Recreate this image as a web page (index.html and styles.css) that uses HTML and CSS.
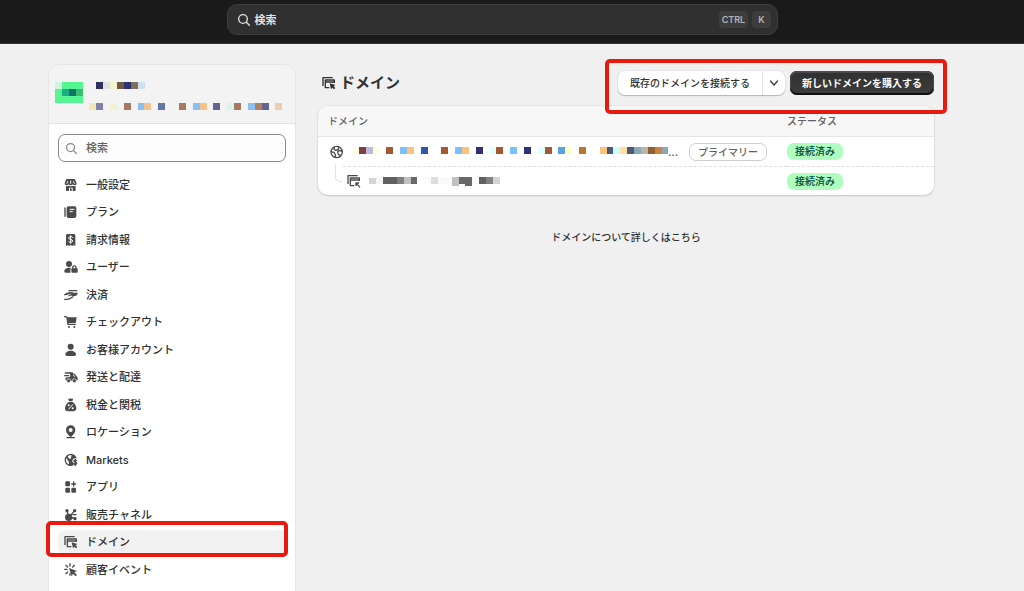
FILE: index.html
```html
<!DOCTYPE html>
<html lang="ja">
<head>
  <meta charset="UTF-8">
  <meta name="viewport" content="width=device-width, initial-scale=1.0">
  <title>ドメイン</title>
  <link rel="stylesheet" href="styles.css">
</head>
<body>
  <svg class="defs" aria-hidden="true">
    <symbol id="i-search" viewBox="0 0 42 42"><g fill="none" stroke="currentColor" stroke-width="4" stroke-linecap="round"><circle cx="18" cy="18" r="13"/><path d="M28 28l9 9"/></g></symbol>
    <symbol id="i-domain" viewBox="0 0 42 42"><g fill="none" stroke="currentColor" stroke-width="4" stroke-linejoin="round"><path d="M3 30V5h29M22 35H10V12h27v9M10 18h27"/></g><path d="M23 22l17 5-5 4 5 5-4 4-5-5-4 5z" fill="currentColor"/></symbol>
  </svg>

  <header class="topbar">
    <button type="button" class="global-search">
      <svg class="icon"><use href="#i-search"/></svg>
      <span class="global-search-label">検索</span>
      <kbd>CTRL</kbd><kbd>K</kbd>
    </button>
  </header>

  <div class="page">
    <aside class="sidebar">
      <div class="shop">
        <svg class="shop-logo" viewBox="0 0 28 21" aria-hidden="true">
          <path fill="#55f591" d="M0 0h28v21H0z"/><path fill="#cff5de" d="M0 0h7v7H0z"/><path fill="#1cae84" d="M7 7h7v7H7z"/><path fill="#117568" d="M14 7h7v7h-7z"/><path fill="#3abc74" d="M21 7h7v7h-7z"/>
        </svg>
        <svg class="shop-name" viewBox="0 0 194 28" aria-hidden="true">
          <path fill="#30305c" d="M7 0h7v7H7z"/><path fill="#e1e1e8" d="M14 0h7v7h-7z"/><path fill="#f3f3d0" d="M21 0h7v7h-7z"/><path fill="#705a3f" d="M28 0h7v7h-7z"/><path fill="#2e3075" d="M35 0h7v7h-7z"/><path fill="#80705a" d="M42 0h7v7h-7z"/><path fill="#cfdfee" d="M49 0h7v7h-7z"/>
          <path fill="#f1e8b8" d="M0 21h7v7H0z"/><path fill="#8080a8" d="M7 21h7v7H7z"/><path fill="#f1f1d8" d="M21 21h7v7h-7z"/><path fill="#a87860" d="M35 21h7v7h-7zM90 21h7v7h-7zM145 21h7v7h-7z"/><path fill="#88c0f5" d="M49 21h7v7h-7zM104 21h7v7h-7zM159 21h7v7h-7z"/><path fill="#f5c18b" d="M55 21h7v7h-7zM111 21h7v7h-7z"/><path fill="#6078a8" d="M69 21h7v7h-7z"/><path fill="#646490" d="M124 21h7v7h-7zM173 21h7v7h-7z"/><path fill="#d8f3f0" d="M138 21h7v7h-7z"/><path fill="#b08060" d="M166 21h7v7h-7z"/><path fill="#ebcdb0" d="M186 21h7v7h-7z"/>
        </svg>
      </div>

      <div class="side-search">
        <svg class="icon"><use href="#i-search"/></svg>
        <input type="search" placeholder="検索" aria-label="検索">
      </div>

      <nav class="menu">
        <ul>
          <li><a href="#"><svg class="icon" viewBox="0 0 42 42"><path d="M9 3h21c2 0 3 1 4 3l4 10c0 4-3 6-6 6-3 0-5-1-6-3-1 2-3 3-6 3s-5-1-6-3c-1 2-3 3-6 3-4 0-6-2-6-6L6 6c0-2 1-3 3-3z"/><path d="M6 24c4 1 7 0 9-1 3 2 8 2 11 0 3 1 6 2 9 1v12c0 2-1 3-3 3h-6V29H15v10H9c-2 0-3-1-3-3z"/><path class="cut" d="M11 11l-2 5M20 9v7M29 11l2 5"/><path d="M18 31h5v8h-5z"/></svg>一般設定</a></li>
          <li><a href="#"><svg class="icon" viewBox="0 0 42 42"><path class="line" d="M3 9v25"/><rect x="8" y="4" width="29" height="35" rx="6"/><path class="cut" d="M18 13h12M18 20h7"/></svg>プラン</a></li>
          <li><a href="#"><svg class="icon" viewBox="0 0 42 42"><path d="M11 3h18c3 0 5 2 5 5v31l-5-3-4 3-5-3-5 3-4-3-5 3V8c0-3 2-5 5-5z"/><path class="cut" d="M26 14c-1-2-3-3-6-3-4 0-6 2-6 4 0 6 12 3 12 9 0 3-3 4-6 4s-5-1-6-3M20 8v23"/></svg>請求情報</a></li>
          <li><a href="#"><svg class="icon" viewBox="0 0 42 42"><circle cx="15" cy="12" r="9"/><path d="M1 34c0-7 6-11 14-11 2 0 4 0 6 1-1 2-2 4-2 6v8H5c-3 0-4-1-4-4z"/><rect x="22" y="25" width="19" height="13" rx="3"/><path class="line" d="M26 26v-3c0-7 10-7 10 0v3"/></svg>ユーザー</a></li>
          <li><a href="#"><svg class="icon" viewBox="0 0 42 42"><path d="M18 6h18c3 0 5 2 5 4H12c1-3 3-4 6-4zM8 14h33l-1 5c-1 4-4 5-7 5H20l4-4c2-2 0-5-3-4L9 20H2z"/><path class="line" d="M2 20c6 0 8-4 14-5l7-1c3 0 3 3 1 4l-9 5M2 34h8c8 0 12-4 17-8"/></svg>決済</a></li>
          <li><a href="#"><svg class="icon" viewBox="0 0 42 42"><path class="line" d="M2 5h4l3 2 3 21h22"/><path d="M9 7h29l-2 14c0 2-2 3-4 3H12z"/><circle cx="15" cy="36" r="3"/><circle cx="31" cy="36" r="3"/></svg>チェックアウト</a></li>
          <li><a href="#"><svg class="icon" viewBox="0 0 42 42"><circle cx="20" cy="11" r="9"/><path d="M4 34c0-6 7-11 16-11s16 5 16 11c0 3-2 5-5 5H9c-3 0-5-2-5-5z"/></svg>お客様アカウント</a></li>
          <li><a href="#"><svg class="icon" viewBox="0 0 42 42"><path class="line" d="M4 9h14M2 17h12"/><path d="M17 7h6c3 0 4 1 5 4h3c3 0 5 5 6 8 3 1 4 3 4 5v4c0 3-2 4-4 4H9c-3 0-5-2-5-5 0-2 1-4 3-5h7c5 0 6-7 4-8z"/><path class="cut" d="M29 15l2 4"/><g class="wheel"><circle cx="14" cy="32" r="6"/><circle cx="31" cy="32" r="6"/></g></svg>発送と配達</a></li>
          <li><a href="#"><svg class="icon" viewBox="0 0 42 42"><path d="M12 1l4 2 4-2 4 2 4-2-3 9H15zM14 12h12c7 5 11 12 11 19 0 6-4 9-9 9H12c-5 0-9-3-9-9 0-7 4-14 11-19z"/><path class="cut" d="M14 33l12-13"/><g fill="#fff"><circle cx="14" cy="22" r="3"/><circle cx="26" cy="31" r="3"/></g></svg>税金と関税</a></li>
          <li><a href="#"><svg class="icon" viewBox="0 0 42 42"><path fill-rule="evenodd" d="M20 1c8 0 14 6 14 14 0 9-6 13-11 19h-6C12 28 6 24 6 15 6 7 12 1 20 1zm0 8a6 6 0 100 12 6 6 0 000-12z"/><path class="line" d="M9 38h22M20 30v8"/></svg>ロケーション</a></li>
          <li><a href="#"><svg class="icon" viewBox="0 0 42 42"><path fill-rule="evenodd" d="M20 3c10 0 17 6 18 14-5-3-13 0-13 6 0 5 3 6 5 7l-2 7c-2 1-5 2-8 2C10 39 2 31 2 21S10 3 20 3zM7 15c-3 9 1 16 8 19v-6l-4-7zm12-8c-3 0-6 1-8 4l6 7 5-3-2-4 5-3z"/><path class="line" d="M38 23c-2-3-9-2-8 2 1 3 8 2 8 6s-7 4-9 1M34 19v19"/></svg>Markets</a></li>
          <li><a href="#"><svg class="icon" viewBox="0 0 42 42"><rect x="4" y="4" width="14" height="15" rx="3"/><rect x="4" y="23" width="14" height="15" rx="3"/><rect x="22" y="23" width="14" height="15" rx="3"/><path class="line" d="M29 6v12M23 12h12"/></svg>アプリ</a></li>
          <li><a href="#"><svg class="icon" viewBox="0 0 42 42"><circle cx="9" cy="8" r="5"/><circle cx="32" cy="8" r="5"/><circle cx="33" cy="32" r="5"/><circle cx="14" cy="28" r="11"/><path class="line" d="M9 8l4 14M32 8L19 23M19 30h14M27 20h9"/></svg>販売チャネル</a></li>
          <li class="marked"><a href="#" class="active" aria-current="page"><svg class="icon"><use href="#i-domain"/></svg>ドメイン</a></li>
          <li><a href="#"><svg class="icon" viewBox="0 0 42 42"><path class="line" d="M18 2v7M6 7l5 5M2 19h7M6 32l5-5M31 7l-5 5M18 31v6"/><path d="M15 15l24 9-8 4 8 8-4 4-8-8-4 8z"/></svg>顧客イベント</a></li>
        </ul>
      </nav>
    </aside>

    <main class="content">
      <div class="title-row">
        <h1><svg class="icon"><use href="#i-domain"/></svg>ドメイン</h1>
        <div class="actions">
          <div class="split">
            <button type="button">既存のドメインを接続する</button>
            <button type="button" class="split-more" aria-label="その他の操作"><svg viewBox="0 0 10 10"><path d="M1.500 3l3.500 4 3.500-4"/></svg></button>
          </div>
          <button type="button" class="primary">新しいドメインを購入する</button>
        </div>
      </div>

      <div class="card">
        <table>
          <thead>
            <tr><th>ドメイン</th><th class="status">ステータス</th></tr>
          </thead>
          <tbody>
            <tr>
              <td>
                <div class="domain">
                  <svg class="icon" viewBox="0 0 42 42"><g fill="none" stroke="currentColor" stroke-width="4" stroke-linejoin="round"><circle cx="20" cy="21" r="17"/><path d="M13 6l-1 7 6 3 7-3 1-8M3 20l9 2 5 8-3 8M38 20l-8-4-7 4 2 8 5 2 1 5"/></g></svg>
                  <svg class="domain-name" viewBox="0 0 316 9" aria-hidden="true">
                    <path fill="#ffffe8" d="M0 0h7v7H0z"/><path fill="#804040" d="M7 0h7v7H7z"/><path fill="#c0b8d8" d="M14 0h7v7h-7z"/><path fill="#ffffe0" d="M21 0h6v7h-6z"/>
                    <path fill="#a85830" d="M34 0h7v7h-7zM89 0h7v7h-7zM144 0h7v7h-7zM193 0h7v7h-7z"/><path fill="#78c0ff" d="M48 0h7v7h-7zM103 0h7v7h-7zM158 0h7v7h-7z"/><path fill="#ffc078" d="M55 0h7v7h-7zM110 0h7v7h-7zM248 0h7v7h-7z"/>
                    <path fill="#3058a8" d="M69 0h7v7h-7z"/><path fill="#303078" d="M124 0h7v7h-7zM172 0h7v7h-7z"/><path fill="#e0ffff" d="M138 0h6v7h-6zM186 0h7v7h-7z"/><path fill="#58a0e0" d="M206 0h7v7h-7z"/><path fill="#ffffc0" d="M213 0h7v7h-7z"/><path fill="#b87430" d="M227 0h7v7h-7z"/>
                    <path fill="#505878" d="M255 0h6v7h-6zM275 0h7v7h-7z"/><path fill="#c8ffff" d="M261 0h7v7h-7z"/><path fill="#ffe0a0" d="M268 0h7v7h-7z"/><path fill="#88a8b8" d="M282 0h7v7h-7zM310 0h6v7h-6z"/><path fill="#b8b8a8" d="M289 0h7v7h-7z"/><path fill="#906030" d="M296 0h7v7h-7z"/><path fill="#c88440" d="M303 0h7v7h-7z"/>
                  </svg>
                  <span class="more">...</span>
                  <span class="pill">プライマリー</span>
                </div>
              </td>
              <td class="status"><span class="badge">接続済み</span></td>
            </tr>
            <tr>
              <td>
                <div class="domain child">
                  <span class="branch"></span>
                  <svg class="icon" viewBox="0 0 42 42"><g fill="none" stroke="currentColor" stroke-width="4" stroke-linejoin="round"><path d="M3 30V5h29M22 35H10V12h27v9M10 18h27M39 40L28 28M27 36v-9h9"/></g></svg>
                  <svg class="domain-name" viewBox="0 0 316 9" aria-hidden="true">
                    <path fill="#d4d4d4" d="M0 1h7v6H0zM124 0h7v7h-7z"/><path fill="#f5f5f5" d="M7 0h7v7H7z"/><path fill="#606060" d="M14 0h14v7H14zM110 0h7v7h-7z"/><path fill="#808080" d="M28 0h7v7h-7zM117 0h7v7h-7z"/><path fill="#c0c0c0" d="M35 0h7v7h-7zM83 0h7v9h-7z"/><path fill="#686868" d="M42 0h6v7h-6zM90 0h6v7h-6zM96 0h7v9h-7z"/><path fill="#fafafa" d="M55 0h7v7h-7zM69 0h14v7H69z"/><path fill="#ddd" d="M62 0h7v7h-7z"/>
                  </svg>
                </div>
              </td>
              <td class="status"><span class="badge">接続済み</span></td>
            </tr>
          </tbody>
        </table>
      </div>

      <p class="help"><a href="#">ドメインについて詳しくはこちら</a></p>
    </main>
  </div>
</body>
</html>
```
FILE: styles.css
```css
* {
  box-sizing: border-box;
}

body {
  display: flex;
  flex-direction: column;
  margin: 0;
  min-height: 100vh;
  background: #f0f0f0;
  color: #303030;
  font-family: Inter, "Noto Sans CJK JP", sans-serif;
  font-size: 11px;
  font-weight: 500;
  line-height: 16px;
}

button,
input {
  font: inherit;
  color: inherit;
}

a {
  color: inherit;
  text-decoration: none;
}

.defs {
  position: absolute;
  width: 0;
  height: 0;
}

.icon {
  flex: none;
  width: 14px;
  height: 14px;
  fill: currentColor;
}

.icon .line,
.icon .cut {
  fill: none;
  stroke: currentColor;
  stroke-width: 4;
  stroke-linecap: round;
}

.icon .cut {
  stroke: #fff;
  stroke-width: 3;
}

.icon .wheel {
  stroke: #fff;
  stroke-width: 2;
}

/* top bar */
.topbar {
  display: flex;
  justify-content: center;
  padding: 4px 20px 8px 0;
  background: #1a1a1a;
  border-bottom: 1px solid #383432;
}

.global-search {
  display: flex;
  align-items: center;
  gap: 4px;
  width: 100%;
  max-width: 551px;
  height: 31px;
  padding: 0 6px 0 9px;
  background: #303030;
  border: 1px solid #3d3d3d;
  border-radius: 10px;
  color: #e3e3e3;
  font-weight: 600;
  text-align: left;
}

.global-search-label {
  flex: 1;
}

kbd {
  padding: 0 3px;
  background: #3d3d3d;
  border-radius: 4px;
  color: #b5b5b5;
  font-family: inherit;
  font-size: 9px;
  line-height: 17px;
}

kbd:last-child {
  padding: 0 6px;
}

/* layout */
.page {
  flex: 1;
  display: flex;
  gap: 22px;
  padding: 20px 90px 0 48px;
}

.sidebar {
  flex: none;
  width: 248px;
  background: #fff;
  border: 1px solid #e6e6e6;
  border-bottom: 0;
  border-radius: 12px 12px 0 0;
}

.shop {
  display: flex;
  align-items: flex-start;
  gap: 6px;
  padding: 17px 6px 13px;
  background: #f3f3f3;
  border-bottom: 1px solid #e3e3e3;
  border-radius: 11px 11px 0 0;
}

.shop-logo {
  width: 28px;
  height: 21px;
  shape-rendering: crispEdges;
}

.shop-name {
  width: 194px;
  height: 28px;
  shape-rendering: crispEdges;
}

.side-search {
  display: flex;
  align-items: center;
  gap: 8px;
  height: 28px;
  margin: 10px 9px 11px;
  padding: 0 6px;
  background: #fdfdfd;
  border: 1px solid #8a8a8a;
  border-radius: 7px;
  color: #8a8a8a;
}

.side-search .icon {
  width: 13px;
  height: 13px;
}

.side-search input {
  flex: 1;
  min-width: 0;
  padding: 0;
  background: none;
  border: 0;
  outline: 0;
}

.side-search input::placeholder {
  color: #616161;
}

.menu ul {
  list-style: none;
  margin: 0;
  padding: 0 9px;
}

.menu li {
  position: relative;
  margin-bottom: 3px;
}

.menu li:nth-child(even) {
  margin-bottom: 4px;
}

.menu a {
  display: flex;
  align-items: center;
  gap: 8px;
  padding: 4px 6px;
  border-radius: 7px;
}

.menu a.active {
  background: #f1f1f1;
}

.menu .icon {
  color: #4a4a4a;
}

/* red frames laid over the highlighted parts */
.marked::after,
.actions::after {
  content: "";
  position: absolute;
  border: 4px solid #e8190f;
  border-radius: 5px;
  pointer-events: none;
}

.marked::after {
  inset: -9px -2px -3px -12px;
}

/* content */
.content {
  flex: 1;
  min-width: 0;
}

.title-row {
  display: flex;
  justify-content: space-between;
  align-items: center;
  padding-top: 7px;
  margin-bottom: 11px;
}

h1 {
  display: flex;
  align-items: center;
  gap: 4px;
  margin: 0;
  padding-left: 4px;
  font-size: 15px;
  font-weight: 700;
  line-height: 24px;
}

.actions {
  position: relative;
  display: flex;
  gap: 5px;
}

.actions::after {
  inset: -12px -13px -19px -13px;
}

.actions button {
  height: 24px;
  border: 0;
  font-size: 10px;
  white-space: nowrap;
}

.split {
  display: flex;
  background: #fff;
  border-radius: 7px;
  box-shadow: 0 1px 1px #b5b5b5, 0 0 0 1px #e6e6e6;
}

.split button {
  padding: 0 12px;
  background: none;
}

.split .split-more {
  display: flex;
  align-items: center;
  padding: 0 6px;
  border-left: 1px solid #e3e3e3;
}

.split-more svg {
  width: 10px;
  height: 10px;
  fill: none;
  stroke: #4a4a4a;
  stroke-width: 1.500;
  stroke-linecap: round;
}

.actions .primary {
  padding: 0 12px;
  background: linear-gradient(#303030, #3d3d3d);
  border-radius: 7px;
  box-shadow: inset 0 1px 0 1px #4a4a4a, inset 0 -1px 0 1px #111;
  color: #fff;
  font-weight: 700;
}

.card {
  background: #fff;
  border-radius: 10px;
  box-shadow: 0 1px 2px #c8c8c8, 0 0 0 1px #e8e8e8;
}

table {
  width: 100%;
  border-collapse: separate;
  border-spacing: 0;
  table-layout: fixed;
  font-size: 10px;
}

th {
  height: 31px;
  padding: 0 10px;
  background: #f7f7f7;
  border-bottom: 1px solid #e6e6e6;
  color: #616161;
  font-weight: 500;
  text-align: left;
}

th:first-child {
  border-top-left-radius: 10px;
}

th:last-child {
  border-top-right-radius: 10px;
}

td {
  padding: 0;
}

.status {
  width: 147px;
  padding: 0;
}

tbody tr + tr .status {
  border-top: 1px dashed #dedede;
}

.domain {
  display: flex;
  align-items: center;
  height: 29px;
  padding-left: 12px;
  color: #4a4a4a;
}

.domain-name {
  flex: none;
  width: 316px;
  height: 9px;
  margin-left: 8px;
  shape-rendering: crispEdges;
}

.more {
  font-size: 11px;
}

.pill {
  margin-left: 11px;
  padding: 0 8px;
  border: 1px solid #cfcfcf;
  border-radius: 7px;
  color: #616161;
}

.badge {
  display: inline-block;
  padding: 0 8px;
  background: #affebf;
  border-radius: 7px;
  color: #014b40;
  line-height: 17px;
}

.domain.child {
  margin-left: 25px;
  padding-left: 4px;
  border-top: 1px dashed #dedede;
}

.branch {
  align-self: flex-start;
  width: 7px;
  height: 18px;
  margin: -3px 5px 0 -12px;
  border: solid #e3e3e3;
  border-width: 0 0 1px 1px;
  border-bottom-left-radius: 5px;
}

.help {
  margin: 34px 0 0;
  font-size: 10px;
  text-align: center;
}
```
